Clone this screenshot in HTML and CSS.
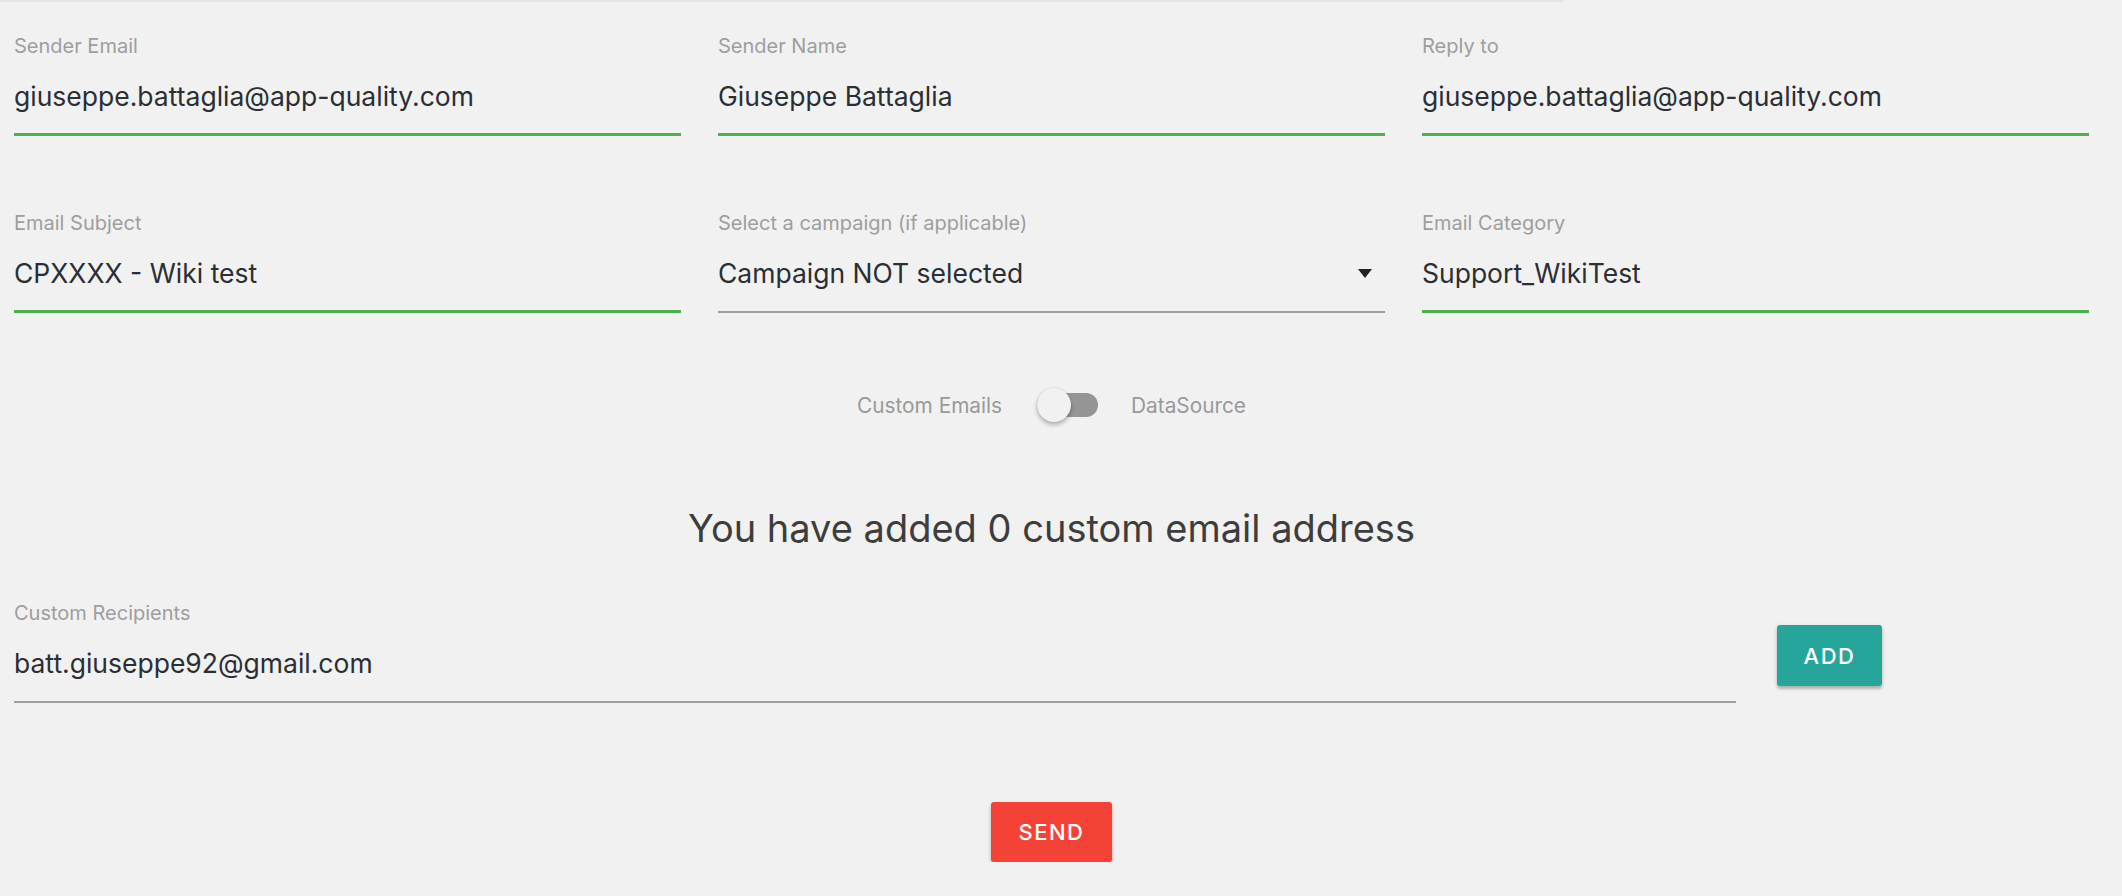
FILE: index.html
```html
<!DOCTYPE html>
<html lang="en">
<head>
  <meta charset="UTF-8" />
  <meta name="viewport" content="width=device-width, initial-scale=1.0"/>
  <title>Send Email</title>
  <link rel="stylesheet" href="styles.css">
</head>
<body>
  <div class="topline"></div>

  <main class="page">
    <div class="grid">
      <div class="field valid">
        <label for="senderEmail">Sender Email</label>
        <input type="text" id="senderEmail" value="giuseppe.battaglia@app-quality.com" />
      </div>
      <div class="field valid">
        <label for="senderName">Sender Name</label>
        <input type="text" id="senderName" value="Giuseppe Battaglia" />
      </div>
      <div class="field valid">
        <label for="replyTo">Reply to</label>
        <input type="text" id="replyTo" value="giuseppe.battaglia@app-quality.com" />
      </div>

      <div class="field valid">
        <label for="subject">Email Subject</label>
        <input type="text" id="subject" value="CPXXXX - Wiki test" />
      </div>
      <div class="field">
        <label>Select a campaign (if applicable)</label>
        <div class="select">
          <span>Campaign NOT selected</span>
          <span class="caret"></span>
        </div>
      </div>
      <div class="field valid">
        <label for="category">Email Category</label>
        <input type="text" id="category" value="Support_WikiTest" />
      </div>
    </div>

    <div class="switch">
      <span>Custom Emails</span>
      <span class="lever"></span>
      <span>DataSource</span>
    </div>

    <h2 class="count">You have added 0 custom email address</h2>

    <div class="recipients">
      <div class="field">
        <label for="recipient">Custom Recipients</label>
        <input type="text" id="recipient" value="batt.giuseppe92@gmail.com" />
      </div>
      <button class="btn add">ADD</button>
    </div>

    <div class="actions">
      <button class="btn send">SEND</button>
    </div>
  </main>
</body>
</html>
```

FILE: styles.css
```css
* { box-sizing: border-box; }

body {
  margin: 0;
  background: #f1f1f1;
  font-family: Inter, 'Liberation Sans', sans-serif;
  overflow: hidden;
}

.topline {
  width: 1563px;
  height: 2px;
  background: #e3e3e3;
}

.page {
  width: 2075px;
  margin-left: 14px;
  padding-top: 32px;
}

.grid {
  display: grid;
  grid-template-columns: repeat(3, 667px);
  column-gap: 37px;
  row-gap: 75px;
}

.field label {
  display: block;
  font-size: 20px;
  line-height: 24px;
  color: #9e9e9e;
}

.field input,
.field .select {
  display: block;
  width: 100%;
  height: 58px;
  margin: 20px 0 0;
  padding: 0 0 20px;
  font-family: inherit;
  font-size: 26.5px;
  line-height: 36px;
  color: #2b2e33;
  background: transparent;
  border: none;
  border-bottom: 2px solid #9e9e9e;
  border-radius: 0;
  outline: none;
}

.field.valid input {
  padding-bottom: 19px;
  border-bottom: 3px solid #4caf50;
}

.field .select {
  display: flex;
  align-items: center;
  justify-content: space-between;
  padding-right: 13px;
}

.caret {
  width: 0;
  height: 0;
  border-left: 7.5px solid transparent;
  border-right: 7.5px solid transparent;
  border-top: 9px solid #222;
}

.switch {
  display: flex;
  justify-content: center;
  align-items: center;
  height: 34px;
  margin-top: 75px;
  font-size: 20.8px;
  color: #999;
}

.lever {
  position: relative;
  width: 61px;
  height: 24px;
  margin: 0 33px 0 35px;
  border-radius: 12px;
  background: #959595;
}

.lever::before {
  content: "";
  position: absolute;
  left: 0;
  top: -5px;
  width: 34px;
  height: 34px;
  border-radius: 50%;
  background: #f1f1f1;
  box-shadow: 0 3px 4px rgba(0, 0, 0, 0.25), 0 0 2px rgba(0, 0, 0, 0.15);
}

.count {
  margin: 81px 0 0;
  font-size: 38px;
  line-height: 50px;
  font-weight: 400;
  text-align: center;
  color: #3d3d3d;
}

.recipients {
  display: flex;
  align-items: flex-start;
  margin-top: 48px;
}

.recipients .field {
  width: 1722px;
}

.btn {
  border: none;
  border-radius: 3px;
  color: #fff;
  font-family: inherit;
  font-size: 22px;
  font-weight: 500;
  letter-spacing: 1.5px;
  cursor: pointer;
  box-shadow: 0 3px 3px rgba(0, 0, 0, 0.22), 0 1px 5px rgba(0, 0, 0, 0.1);
}

.add {
  width: 105px;
  height: 61px;
  margin: 24px 0 0 41px;
  background: #26a69a;
}

.actions {
  display: flex;
  justify-content: center;
  margin-top: 99px;
}

.send {
  width: 121px;
  height: 60px;
  background: #f44336;
}
```
